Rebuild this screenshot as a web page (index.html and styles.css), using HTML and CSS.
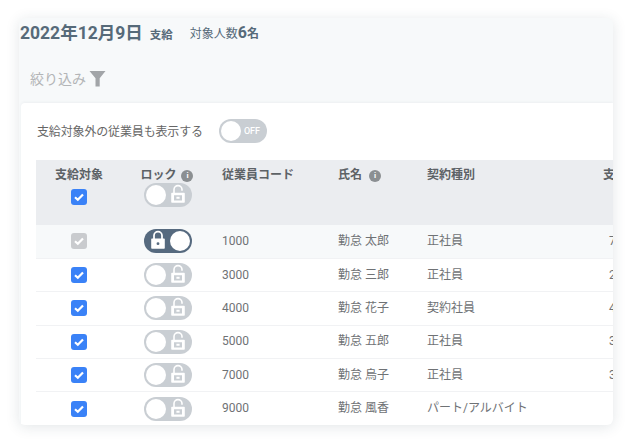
FILE: index.html
```html
<!DOCTYPE html>
<html lang="ja">
<head>
<meta charset="utf-8">
<title>支給対象</title>
<link rel="stylesheet" href="styles.css">
</head>
<body>
<svg class="defs" width="0" height="0" aria-hidden="true">
  <symbol id="lock-open" viewBox="0 0 20 24">
    <path d="M5 11V6.500a5 5 0 0 1 10 0V8" fill="none" stroke="currentColor" stroke-width="2"/>
    <path fill-rule="evenodd" d="M2.500 10.500h15a1 1 0 0 1 1 1V22a1 1 0 0 1-1 1h-15a1 1 0 0 1-1-1V11.500a1 1 0 0 1 1-1zM5 13.500V20h10v-6.500zM8 15.500h4V18H8z" fill="currentColor"/>
  </symbol>
  <symbol id="lock-closed" viewBox="0 0 20 24">
    <path d="M5 11V6.500a5 5 0 0 1 10 0V11" fill="none" stroke="currentColor" stroke-width="2.200"/>
    <path fill-rule="evenodd" d="M2.500 10h15a1 1 0 0 1 1 1v11a1 1 0 0 1-1 1h-15a1 1 0 0 1-1-1V11a1 1 0 0 1 1-1zM10 14.800a1.800 1.800 0 1 0 0 3.600 1.800 1.800 0 0 0 0-3.600z" fill="currentColor"/>
  </symbol>
  <symbol id="tick" viewBox="0 0 16 16">
    <path d="M4 8.300l2.800 2.500L12 5.500" fill="none" stroke="currentColor" stroke-width="2.200"/>
  </symbol>
</svg>
<main class="card">
  <header class="summary">
    <span class="date">2022年12月9日</span>
    <span class="kind">支給</span>
    <span class="target">対象人数<b>6<small>名</small></b></span>
  </header>
  <div class="filter">
    <span>絞り込み</span>
    <svg class="funnel" width="17" height="17" viewBox="0 0 17 17"><path d="M0.500 1h16L10.700 8.300V16.500H6.500V8.300z" fill="currentColor"/></svg>
  </div>
  <section class="panel">
    <div class="option">
      <span class="option-label">支給対象外の従業員も表示する</span>
      <span class="switch"><i class="knob"></i><em>OFF</em></span>
    </div>
    <table class="staff">
      <colgroup>
        <col class="c-pay"><col class="c-lock"><col class="c-code"><col class="c-name"><col class="c-type"><col class="c-rest">
      </colgroup>
      <thead>
        <tr>
          <th class="center"><div>支給対象</div><span class="check on"><svg><use href="#tick"/></svg></span></th>
          <th class="center"><div>ロック <i class="info">i</i></div>
            <span class="lock"><i class="knob"></i><svg><use href="#lock-open"/></svg></span></th>
          <th>従業員コード</th>
          <th>氏名 <i class="info name-info">i</i></th>
          <th>契約種別</th>
          <th>支給</th>
        </tr>
      </thead>
      <tbody>
        <tr class="locked">
          <td class="center"><span class="check off"><svg><use href="#tick"/></svg></span></td>
          <td class="center"><span class="lock closed"><svg><use href="#lock-closed"/></svg><i class="knob"></i></span></td>
          <td>1000</td><td>勤怠 太郎</td><td>正社員</td><td>7</td>
        </tr>
        <tr>
          <td class="center"><span class="check on"><svg><use href="#tick"/></svg></span></td>
          <td class="center"><span class="lock"><i class="knob"></i><svg><use href="#lock-open"/></svg></span></td>
          <td>3000</td><td>勤怠 三郎</td><td>正社員</td><td>2</td>
        </tr>
        <tr>
          <td class="center"><span class="check on"><svg><use href="#tick"/></svg></span></td>
          <td class="center"><span class="lock"><i class="knob"></i><svg><use href="#lock-open"/></svg></span></td>
          <td>4000</td><td>勤怠 花子</td><td>契約社員</td><td>4</td>
        </tr>
        <tr>
          <td class="center"><span class="check on"><svg><use href="#tick"/></svg></span></td>
          <td class="center"><span class="lock"><i class="knob"></i><svg><use href="#lock-open"/></svg></span></td>
          <td>5000</td><td>勤怠 五郎</td><td>正社員</td><td>3</td>
        </tr>
        <tr>
          <td class="center"><span class="check on"><svg><use href="#tick"/></svg></span></td>
          <td class="center"><span class="lock"><i class="knob"></i><svg><use href="#lock-open"/></svg></span></td>
          <td>7000</td><td>勤怠 烏子</td><td>正社員</td><td>3</td>
        </tr>
        <tr>
          <td class="center"><span class="check on"><svg><use href="#tick"/></svg></span></td>
          <td class="center"><span class="lock"><i class="knob"></i><svg><use href="#lock-open"/></svg></span></td>
          <td>9000</td><td>勤怠 風香</td><td>パート/アルバイト</td><td></td>
        </tr>
      </tbody>
    </table>
  </section>
</main>
</body>
</html>
```
FILE: styles.css
```css
* { box-sizing: border-box; }
html, body { margin: 0; height: 100%; overflow: hidden; background: #fff; }
body {
  padding: 18px 19px 19px;
  font-family: Roboto, "Noto Sans CJK JP", sans-serif;
  color: #6a6f73;
}
.defs { position: absolute; }
.card {
  width: 594px;
  height: 407px;
  background: #f7f9fa;
  border-radius: 6px;
  box-shadow: 0 2px 14px rgba(40, 60, 80, .13);
  overflow: hidden;
  display: flex;
  flex-direction: column;
}
.summary {
  height: 29px;
  padding-left: 1px;
  display: flex;
  align-items: center;
  color: #566a79;
  white-space: nowrap;
}
.date { font-size: 17.500px; font-weight: 700; line-height: 24px; }
.kind { font-size: 11.500px; font-weight: 700; margin-left: 7px; margin-top: 2px; }
.target { font-size: 12px; margin-left: 17px; margin-top: 1px; line-height: 20px; }
.target b { font-size: 16px; }
.target small { font-size: 12px; }
.filter {
  height: 56px;
  padding: 6px 0 0 11px;
  display: flex;
  align-items: center;
  gap: 3px;
  font-size: 14px;
  color: #b3b5b7;
}
.funnel { color: #a2a5a8; }
.panel {
  flex: 1;
  margin-left: 2px;
  background: #fff;
  border-radius: 4px 0 0 0;
  box-shadow: 0 -1px 3px rgba(40, 60, 80, .05);
  overflow: hidden;
}
.option {
  height: 57px;
  padding: 0 0 2px 16px;
  display: flex;
  align-items: center;
  gap: 16px;
  font-size: 12px;
  color: #666;
}
.option-label { letter-spacing: -.15px; }
.switch {
  width: 48px;
  height: 24px;
  border-radius: 12px;
  background: #c9ced3;
  padding: 2px;
  display: flex;
  align-items: center;
  gap: 3px;
}
.knob {
  display: block;
  width: 20px;
  height: 20px;
  border-radius: 50%;
  background: #fff;
  flex: none;
}
.switch em { font-style: normal; font-size: 9px; color: #fff; font-weight: 500; }
.staff {
  table-layout: fixed;
  width: 592px;
  margin-left: 15px;
  border-collapse: collapse;
  font-size: 12px;
}
.c-pay { width: 86px; }
.c-lock { width: 90px; }
.c-code { width: 116px; }
.c-name { width: 89px; }
.c-type { width: 176px; }
.c-rest { width: 35px; }
thead tr { height: 65px; background: #ebedf0; }
th {
  vertical-align: top;
  text-align: left;
  padding: 7px 0 0 10px;
  font-weight: 700;
  font-size: 12px;
  line-height: 17px;
  color: #5d6266;
  white-space: nowrap;
}
td {
  height: 33.400px;
  padding: 0 0 0 10px;
  line-height: 17px;
  color: #6f7275;
  border-bottom: 1px solid #f1f2f4;
  white-space: nowrap;
  overflow: hidden;
}
td:last-child { padding-left: 16px; }
th.center, td.center { text-align: center; padding-left: 0; }
tr.locked { background: #f7f9fa; }
tbody tr:last-child td { border-bottom: 0; }
.info {
  display: inline-block;
  width: 12px;
  height: 12px;
  border-radius: 50%;
  background: #8b8f92;
  color: #fff;
  font-size: 8px;
  font-style: normal;
  line-height: 12px;
  text-align: center;
  vertical-align: 1px;
  margin-left: 2px;
}
.name-info { margin-left: 4px; }
.check {
  display: block;
  width: 16px;
  height: 16px;
  margin: 0 auto;
  border-radius: 3px;
  color: #fff;
}
.check svg { display: block; width: 16px; height: 16px; }
.check.on { background: #3a82f7; }
.check.off { background: #c9cbce; }
th .check { margin-top: 5px; }
.lock {
  display: flex;
  align-items: center;
  gap: 4px;
  width: 48px;
  height: 24px;
  margin: 0 auto;
  padding: 2px;
  border-radius: 12px;
  background: #c9ced3;
  color: #fff;
  transform: translateX(1px);
}
th .lock { transform: translate(1px, -1px); }
.lock svg { width: 16px; height: 20px; flex: none; margin-top: -2px; }
.lock.closed { background: #566a7f; justify-content: flex-end; }
```
